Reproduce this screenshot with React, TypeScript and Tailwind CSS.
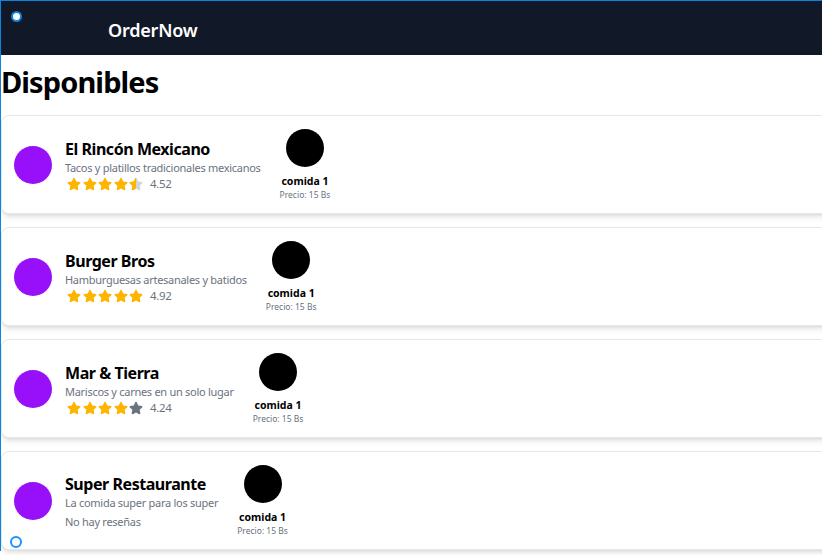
import { FaStar } from 'react-icons/fa';

type Place = {
  name: string;
  desc: string;
  rating: number | null;
};

const places: Place[] = [
  { name: 'El Rincón Mexicano', desc: 'Tacos y platillos tradicionales mexicanos', rating: 4.52 },
  { name: 'Burger Bros', desc: 'Hamburguesas artesanales y batidos', rating: 4.92 },
  { name: 'Mar & Tierra', desc: 'Mariscos y carnes en un solo lugar', rating: 4.24 },
  { name: 'Super Restaurante', desc: 'La comida super para los super', rating: null },
];

function Stars({ value }: { value: number }) {
  return (
    <div className="flex items-center gap-[1.5px]">
      {[1, 2, 3, 4, 5].map((i) => {
        const full = value >= i - 0.25;
        const half = !full && value >= i - 0.75;
        if (half) {
          return (
            <span key={i} className="relative block w-[14px] h-[14px]">
              <FaStar className="absolute inset-0 w-[14px] h-[14px] text-[#d1d5db]" />
              <span className="absolute inset-y-0 left-0 w-[7px] overflow-hidden">
                <FaStar className="w-[14px] h-[14px] text-[#ffb400]" />
              </span>
            </span>
          );
        }
        return (
          <FaStar
            key={i}
            className={full ? 'w-[14px] h-[14px] text-[#ffb400]' : 'w-[14px] h-[14px] text-[#6b7280]'}
          />
        );
      })}
    </div>
  );
}

function PlaceCard({ p }: { p: Place }) {
  return (
    <div className="flex items-center h-[99px] pl-[12px] bg-white border border-[#e5e7eb] rounded-lg shadow-md">
      <div className="w-[38px] h-[38px] rounded-full bg-[#9810fa] shrink-0" />
      <div className="ml-[13px] flex flex-col pt-[2px]">
        <div className="text-[16px] font-bold leading-[21px] tracking-[-0.45px] text-black">{p.name}</div>
        <div className="text-[11px] leading-[16px] tracking-[-0.28px] text-[#6b7280]">{p.desc}</div>
        {p.rating !== null ? (
          <div className="flex items-center gap-[7px] pl-[2px] -mt-[1px]">
            <Stars value={p.rating} />
            <span className="text-[11.5px] tracking-[-0.3px] text-[#6b7280]">{p.rating.toFixed(2)}</span>
          </div>
        ) : (
          <div className="text-[11px] leading-[16px] tracking-[-0.28px] mt-[3px] text-[#6b7280]">No hay reseñas</div>
        )}
      </div>
      <div className="ml-[19px] flex flex-col items-center">
        <div className="w-[38px] h-[38px] rounded-full bg-black" />
        <div className="mt-[7px] text-[10.5px] font-bold leading-[14px] text-black">comida 1</div>
        <div className="text-[8.5px] leading-[13px] text-[#6b7280]">Precio: 15 Bs</div>
      </div>
    </div>
  );
}

export default function App() {
  return (
    <div
      className="relative w-[822px] h-[555px] overflow-hidden bg-white"
      style={{ fontFamily: '"Noto Sans", "Open Sans", sans-serif' }}
    >
      <header className="h-[55px] bg-[#111827] flex items-center pl-[108px] pt-[5px]">
        <span className="text-white text-[18px] font-semibold tracking-[-0.2px]">OrderNow</span>
      </header>
      <h1 className="text-[29px] font-bold leading-[38px] tracking-[-0.9px] text-black pl-[1px] mt-[8px] mb-[14px]">
        Disponibles
      </h1>
      <div className="flex flex-col gap-[13px] pl-[1px] -mr-[10px]">
        {places.map((p) => (
          <PlaceCard key={p.name} p={p} />
        ))}
      </div>

      {/* selection overlay */}
      <div className="absolute left-0 top-0 w-[822px] h-[551px] border-t border-l border-[#0a84e0] pointer-events-none" />
      <div className="absolute left-[11px] top-[11px] w-[11px] h-[11px] rounded-full bg-white border-2 border-[#0a84e0]" />
      <div className="absolute left-[10px] top-[536px] w-[12px] h-[12px] rounded-full bg-white border-2 border-[#1e90ff]" />
    </div>
  );
}
